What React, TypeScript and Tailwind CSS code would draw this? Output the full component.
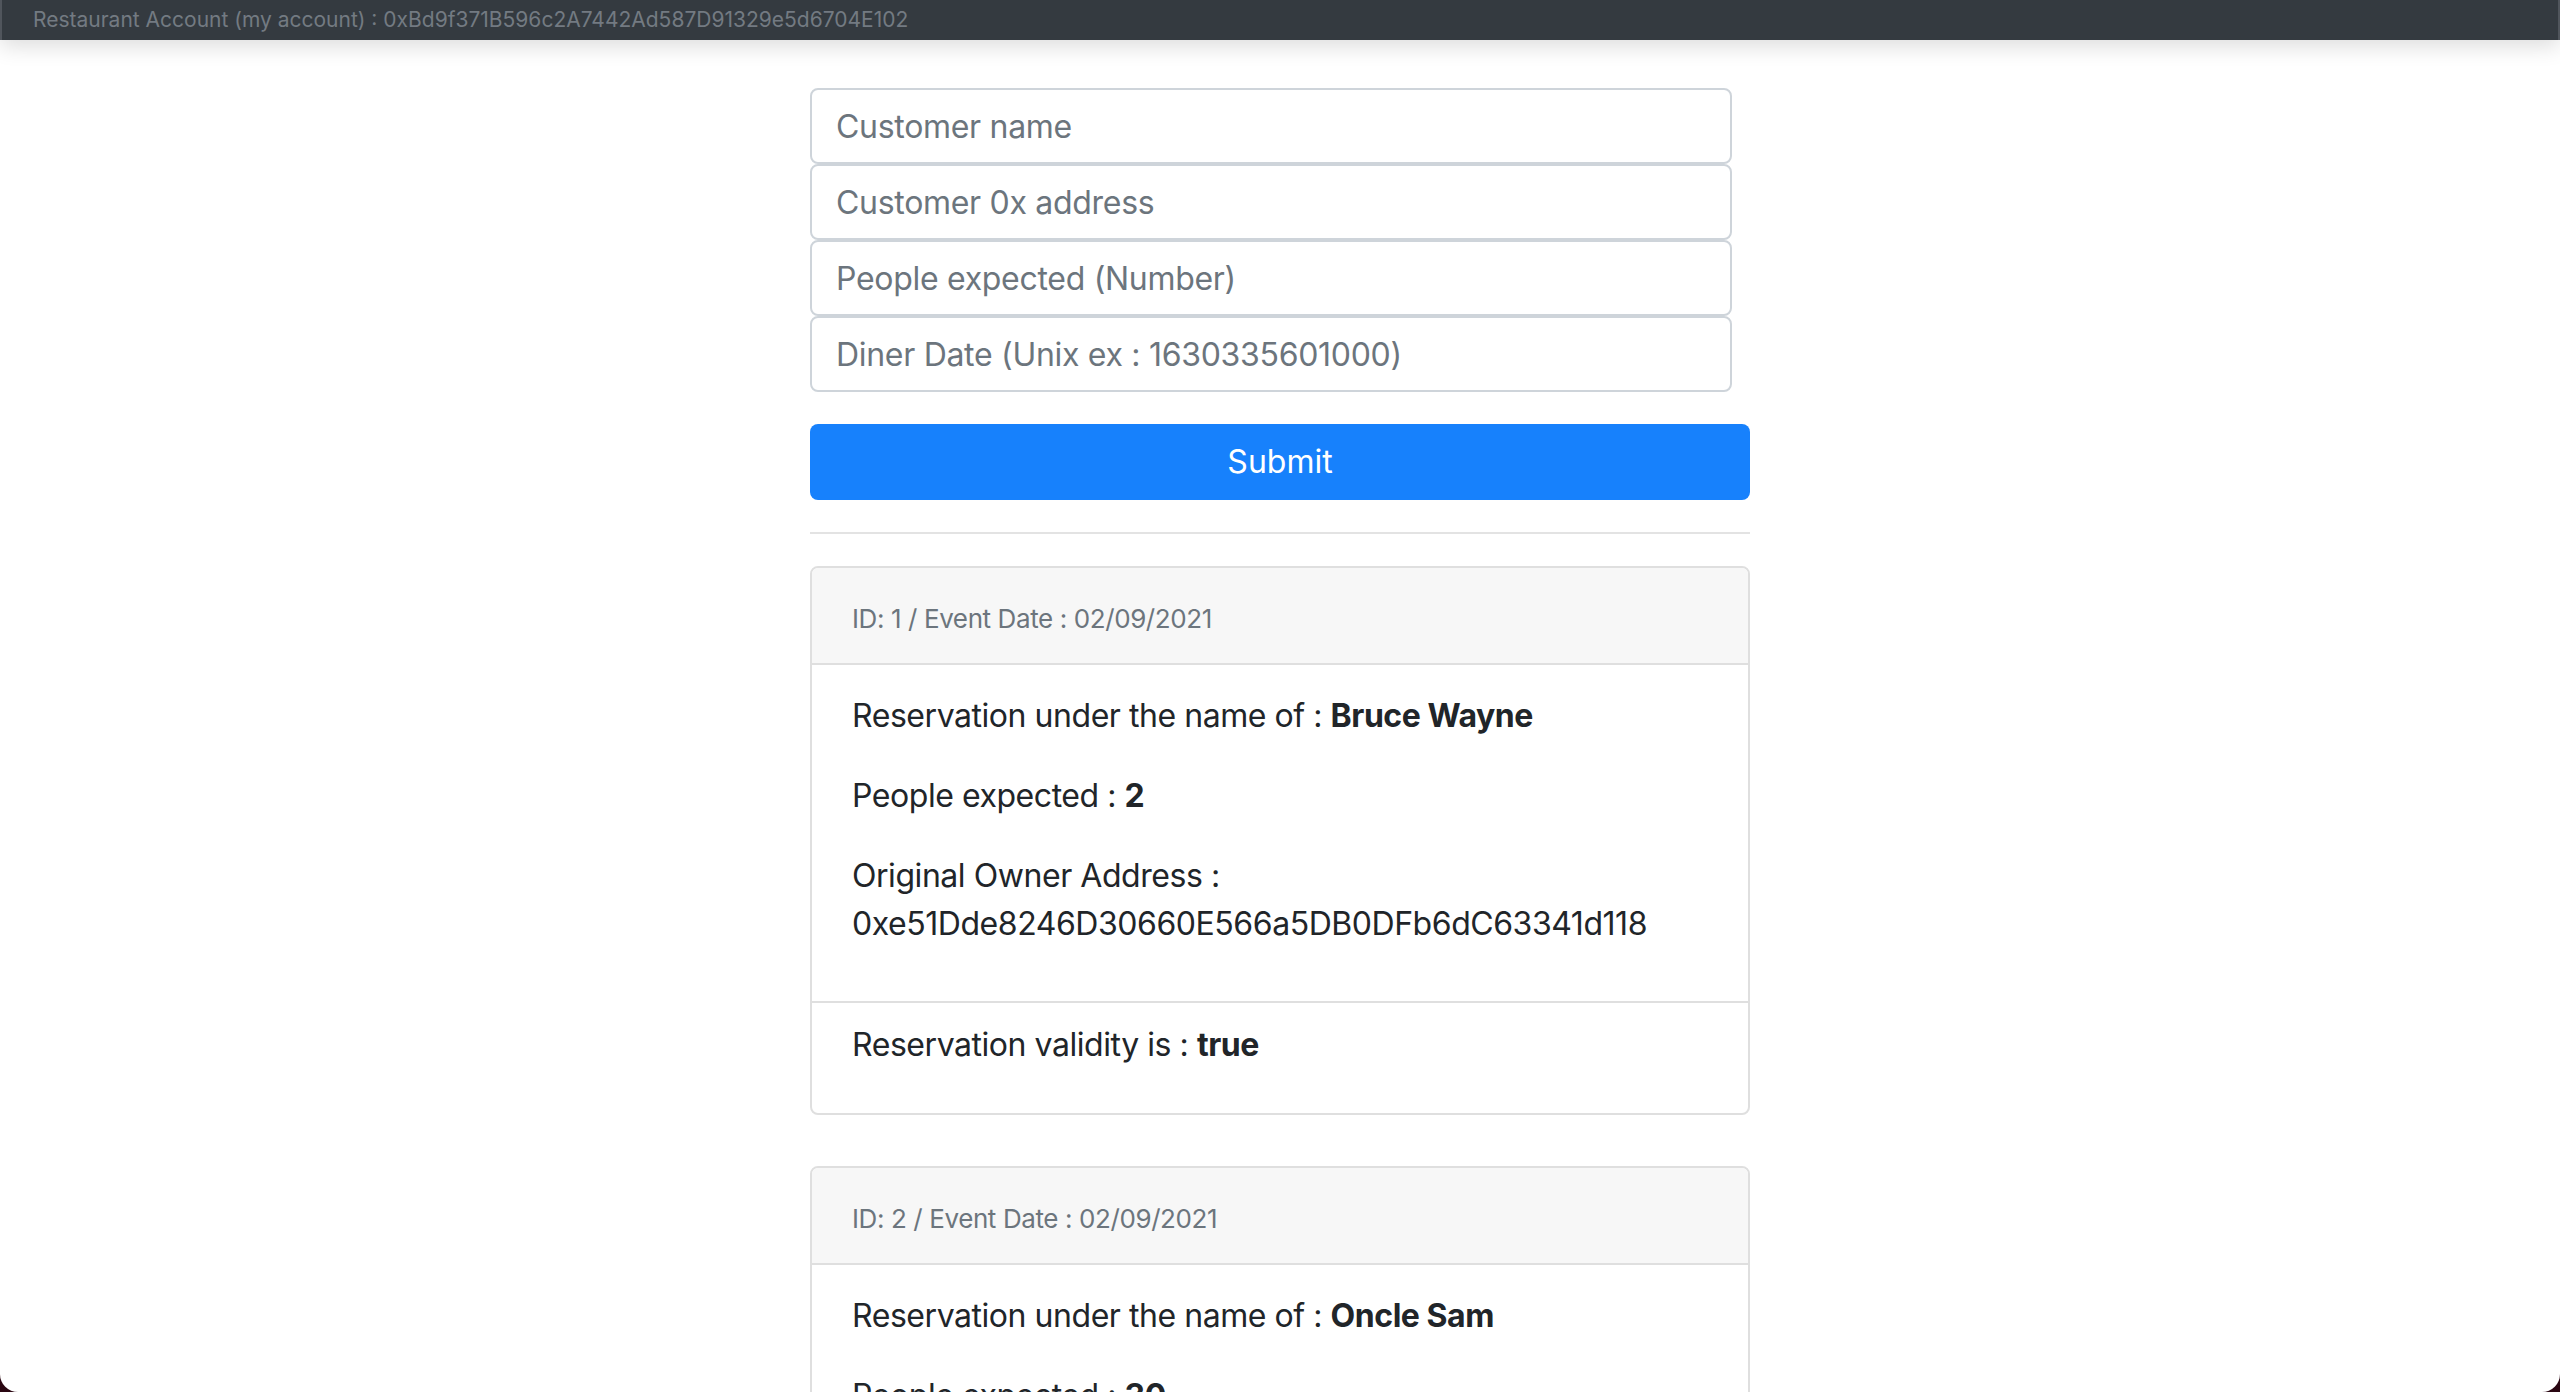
const reservations = [
  {
    id: 1,
    date: "02/09/2021",
    name: "Bruce Wayne",
    people: 2,
    owner: "0xe51Dde8246D30660E566a5DB0DFb6dC63341d118",
    valid: true,
  },
  {
    id: 2,
    date: "02/09/2021",
    name: "Oncle Sam",
    people: 30,
    owner: "0x4B0897b0513fdC7C541B6d9D7E929C4e5364D2dB",
    valid: true,
  },
];

const placeholders = [
  "Customer name",
  "Customer 0x address",
  "People expected (Number)",
  "Diner Date (Unix ex : 1630335601000)",
];

function ReservationCard({ r }: { r: (typeof reservations)[number] }) {
  return (
    <div className="mb-[51px] overflow-hidden rounded-[8px] border-2 border-[#dfdfdf]">
      <div className="flex h-[97px] items-center border-b-2 border-[#dfdfdf] bg-[#f7f7f7] px-10 pt-[5px] text-[26px] tracking-[-0.4px] text-[#6c757d]">
        ID: {r.id} / Event Date : {r.date}
      </div>
      <div className="px-10 pt-[27px] pb-[21px] text-[32px] leading-[48px] tracking-[-0.45px] text-[#212529]">
        <p className="mb-8">
          Reservation under the name of : <b className="font-bold">{r.name}</b>
        </p>
        <p className="mb-8">
          People expected : <b className="font-bold">{r.people}</b>
        </p>
        <p className="mb-8">
          Original Owner Address :
          <br />
          {r.owner}
        </p>
      </div>
      <div className="border-t-2 border-[#dfdfdf] px-10 pt-[18px] pb-[12px] text-[32px] leading-[48px] tracking-[-0.45px] text-[#212529]">
        <p className="mb-8">
          Reservation validity is : <b className="font-bold">{r.valid ? "true" : "false"}</b>
        </p>
      </div>
    </div>
  );
}

export default function App() {
  return (
    <div className="h-[1392px] bg-[#2a0712] font-['Inter','Liberation_Sans',sans-serif]">
      <div className="flex h-full flex-col overflow-hidden rounded-b-[18px] bg-white">
        <div className="relative z-10 flex h-[40px] shrink-0 items-center border-x-2 border-[#50555c] bg-[#343a40] px-[31px] text-[21px] text-[#737a82] shadow-[0_6px_22px_rgba(0,0,0,0.14)]">
          Restaurant Account (my account) : 0xBd9f371B596c2A7442Ad587D91329e5d6704E102
        </div>
        <div className="mx-auto w-[940px] pt-[48px]">
          <form
            onSubmit={(e) => e.preventDefault()}
            className="flex flex-col"
          >
            <div className="flex w-[922px] flex-col">
              {placeholders.map((p) => (
                <input
                  key={p}
                  type="text"
                  placeholder={p}
                  className="h-[76px] rounded-[8px] border-2 border-[#ced4da] bg-white px-6 text-[32px] tracking-[-0.3px] text-[#495057] outline-none placeholder:text-[#6c757d]"
                />
              ))}
            </div>
            <button
              type="submit"
              className="mt-[32px] h-[76px] w-full rounded-[8px] bg-[#1781fc] text-[32px] text-white"
            >
              Submit
            </button>
          </form>
          <hr className="my-8 border-t-2 border-[#e3e3e3]" />
          {reservations.map((r) => (
            <ReservationCard key={r.id} r={r} />
          ))}
        </div>
      </div>
    </div>
  );
}
